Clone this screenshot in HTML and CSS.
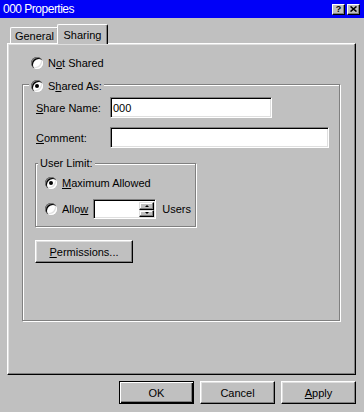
FILE: index.html
```html
<!DOCTYPE html>
<html>
<head>
  <title>000 Properties</title>
  <link rel="stylesheet" href="styles.css">
</head>
<body>
  <div class="window">
    <div class="titlebar">
      <span class="title">000 Properties</span>
      <div class="cap-btns">
        <span class="cap-btn help">?</span>
        <span class="cap-btn">
          <svg width="7" height="6" viewBox="0 0 7 6"><path d="M0.5 0.5 L6.5 5.5 M6.5 0.5 L0.5 5.5" stroke="#000" stroke-width="1.6"/></svg>
        </span>
      </div>
    </div>

    <div class="tabs">
      <div class="tab">General</div>
      <div class="tab active">Sharing</div>
    </div>

    <div class="panel">
      <div class="option not-shared">
        <span class="radio"></span>
        <span>N<u>o</u>t Shared</span>
      </div>

      <div class="group shared">
        <div class="legend option">
          <span class="radio checked"></span>
          <span>S<u>h</u>ared As:</span>
        </div>

        <div class="field first">
          <label><u>S</u>hare Name:</label>
          <div class="edit name">000</div>
        </div>
        <div class="field second">
          <label><u>C</u>omment:</label>
          <div class="edit comment"></div>
        </div>

        <div class="group limit">
          <div class="legend text-legend">User Limit:</div>
          <div class="option max">
            <span class="radio checked"></span>
            <span><u>M</u>aximum Allowed</span>
          </div>
          <div class="allow">
            <span class="radio"></span>
            <span>Allo<u>w</u></span>
            <div class="edit spin">
              <div class="spin-btns">
                <span class="spin-btn"><i class="arrow up"></i></span>
                <span class="spin-btn"><i class="arrow down"></i></span>
              </div>
            </div>
            <span class="users">Users</span>
          </div>
        </div>

        <div class="btn perms"><span><u>P</u>ermissions...</span></div>
      </div>
    </div>

    <div class="actions">
      <div class="btn default">OK</div>
      <div class="btn">Cancel</div>
      <div class="btn"><span><u>A</u>pply</span></div>
    </div>
  </div>
</body>
</html>
```

FILE: styles.css
```css
body {
  margin: 0;
  background-color: #c0c0c0;
  font-family: "Liberation Sans", Arial, sans-serif;
  font-size: 11px;
  color: #000;
}

.window {
  width: 364px;
  height: 412px;
}

u {
  text-decoration: underline;
  text-underline-offset: 1px;
}

/* title bar */
.titlebar {
  height: 18px;
  box-sizing: border-box;
  background-color: #0000f8;
  color: #fff;
  display: flex;
  align-items: center;
  justify-content: space-between;
  padding: 0 4px 0 3px;
}

.title {
  font-size: 12px;
  letter-spacing: -0.5px;
}

.cap-btns {
  display: flex;
  gap: 2px;
}

.cap-btn {
  width: 13px;
  height: 11px;
  box-sizing: border-box;
  background-color: #c0c0c0;
  border: 1px solid;
  border-color: #fff #000 #000 #fff;
  box-shadow: inset -1px -1px 0 #808080;
  display: flex;
  align-items: center;
  justify-content: center;
  color: #000;
}

.cap-btn.help {
  font-size: 9px;
  font-weight: bold;
  line-height: 9px;
}

/* tabs */
.tabs {
  display: flex;
  align-items: flex-end;
  height: 19px;
  margin-top: 6px;
  padding-left: 10px;
}

.tab {
  width: 49px;
  height: 16px;
  box-sizing: border-box;
  background-color: #c0c0c0;
  border-top: 1px solid #fff;
  border-left: 1px solid #fff;
  border-right: 1px solid #000;
  border-radius: 2px 2px 0 0;
  box-shadow: inset -1px 0 0 #808080;
  display: flex;
  align-items: center;
  justify-content: center;
}

.tab.active {
  width: 51px;
  height: 20px;
  margin-left: -2px;
  margin-bottom: -1px;
  position: relative;
  z-index: 2;
}

/* panel */
.panel {
  margin-left: 7px;
  width: 349px;
  height: 332px;
  box-sizing: border-box;
  border: 1px solid;
  border-color: #fff #000 #000 #fff;
  box-shadow: inset -1px -1px 0 #808080, inset 1px 1px 0 #dfdfdf;
}

.option {
  display: flex;
  align-items: center;
  gap: 5px;
  height: 12px;
}

.not-shared {
  margin-top: 13px;
  margin-left: 23px;
}

.radio {
  width: 12px;
  height: 12px;
  flex: none;
  border-radius: 50%;
  background-color: #fff;
  box-shadow: inset 1px 1px 0 #808080, inset 2px 2px 0 #000, inset -1px -1px 0 #fff, inset -2px -2px 0 #dfdfdf;
  display: flex;
  align-items: center;
  justify-content: center;
}

.radio.checked::after {
  content: "";
  width: 4px;
  height: 4px;
  border-radius: 50%;
  background-color: #000;
}

/* group boxes */
.group {
  box-sizing: border-box;
  border: 1px solid #808080;
  box-shadow: inset 1px 1px 0 #fff, 1px 1px 0 #fff;
}

.group.shared {
  margin-top: 15px;
  margin-left: 14px;
  width: 318px;
  height: 237px;
}

.legend {
  width: fit-content;
  background-color: #c0c0c0;
  padding: 0 2px;
}

.shared > .legend {
  margin-top: -5px;
  margin-left: 6px;
}

.text-legend {
  height: 13px;
  line-height: 13px;
  margin-top: -7px;
  margin-left: 2px;
}

.field {
  display: flex;
  align-items: center;
  margin-left: 13px;
}

.field label {
  width: 74px;
}

.field.first {
  margin-top: 5px;
}

.field.second {
  margin-top: 9px;
}

.edit {
  height: 21px;
  box-sizing: border-box;
  background-color: #fff;
  border: 1px solid;
  border-color: #808080 #fff #fff #808080;
  box-shadow: inset 1px 1px 0 #000, inset -1px -1px 0 #dfdfdf;
  display: flex;
  align-items: center;
  padding-left: 2px;
}

.edit.name {
  width: 162px;
}

.edit.comment {
  width: 219px;
}

.group.limit {
  margin-top: 15px;
  margin-left: 12px;
  width: 161px;
  height: 64px;
}

.option.max {
  margin-top: 7px;
  margin-left: 9px;
}

.allow {
  display: flex;
  align-items: center;
  gap: 5px;
  height: 20px;
  margin-top: 10px;
  margin-left: 9px;
}

.edit.spin {
  width: 63px;
  height: 20px;
  padding: 1px;
  justify-content: flex-end;
  align-items: stretch;
}

.spin-btns {
  display: flex;
  flex-direction: column;
  width: 15px;
  margin: 1px 0 0 0;
}

.spin-btn {
  flex: 1;
  box-sizing: border-box;
  background-color: #c0c0c0;
  border: 1px solid;
  border-color: #dfdfdf #000 #000 #dfdfdf;
  box-shadow: inset -1px -1px 0 #808080, inset 1px 1px 0 #fff;
  display: flex;
  align-items: center;
  justify-content: center;
}

.arrow {
  width: 0;
  height: 0;
  border-left: 2px solid transparent;
  border-right: 2px solid transparent;
}

.arrow.up {
  border-bottom: 2px solid #000;
}

.arrow.down {
  border-top: 2px solid #000;
}

.users {
  margin-left: 1px;
}

/* buttons */
.btn {
  width: 75px;
  height: 23px;
  box-sizing: border-box;
  background-color: #c0c0c0;
  border: 1px solid;
  border-color: #fff #000 #000 #fff;
  box-shadow: inset -1px -1px 0 #808080, inset 1px 1px 0 #dfdfdf;
  display: flex;
  align-items: center;
  justify-content: center;
}

.btn.default {
  border-color: #000;
  box-shadow: inset 1px 1px 0 #fff, inset -1px -1px 0 #000, inset -2px -2px 0 #808080;
}

.btn.perms {
  width: 98px;
  margin-top: 13px;
  margin-left: 12px;
}

.actions {
  display: flex;
  justify-content: flex-end;
  gap: 6px;
  margin-top: 6px;
  padding-right: 8px;
}
```
